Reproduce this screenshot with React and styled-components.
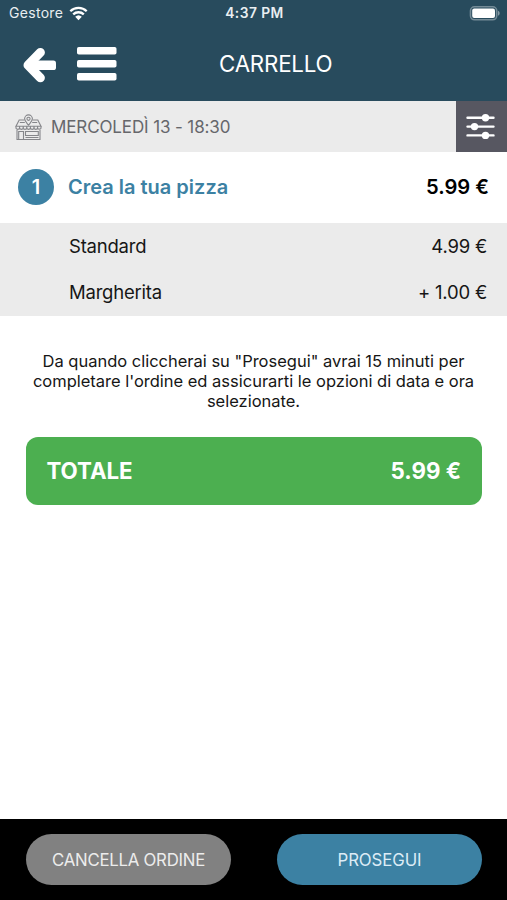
import styled, { createGlobalStyle } from "styled-components";

const GlobalStyle = createGlobalStyle`
  * {
    box-sizing: border-box;
  }

  body {
    margin: 0;
    background: #fff;
    font-family: Inter, "Liberation Sans", sans-serif;
  }
`;

const Screen = styled.div`
  display: flex;
  flex-direction: column;
  width: 507px;
  height: 900px;
  overflow: hidden;
  background: #fff;
  color: #161616;
`;

const Header = styled.header`
  height: 101px;
  background: #284b5d;
  color: #fff;
`;

const StatusBar = styled.div`
  display: grid;
  grid-template-columns: 1fr auto 1fr;
  align-items: center;
  height: 27px;
  padding: 0 7px 0 9px;
  color: #e9eef1;
`;

const Carrier = styled.div`
  display: flex;
  align-items: center;
  gap: 6px;
`;

const BatteryWrapper = styled.div`
  display: flex;
  justify-content: flex-end;
`;

const TitleBar = styled.div`
  display: flex;
  align-items: center;
  height: 73px;
  padding-left: 22px;

  & svg {
    flex: none;
  }
`;

const MenuIcon = styled.svg`
  margin: 0 102px 0 20px;
`;

const Text = styled.span`
  font-size: ${({ $size }) => $size}px;
  font-weight: ${({ $weight }) => $weight || 400};
  letter-spacing: ${({ $spacing }) => $spacing || 0}px;
  line-height: 1.2;
  white-space: nowrap;
`;

const Title = styled(Text)`
  padding-top: 2px;
`;

const DateBar = styled.div`
  display: flex;
  align-items: center;
  height: 51px;
  padding-left: 15px;
  background: #ebebeb;
  color: #66676b;
`;

const DateText = styled(Text)`
  flex: 1;
  margin-left: 9px;
  padding-top: 2px;
`;

const FilterButton = styled.button`
  display: flex;
  align-items: center;
  justify-content: center;
  width: 51px;
  height: 51px;
  padding: 0 2px 0 0;
  border: none;
  background: #575761;
`;

const Product = styled.div`
  display: flex;
  align-items: center;
  height: 71px;
  padding: 0 18px 1px;
  color: #000;
`;

const Quantity = styled.div`
  display: flex;
  align-items: center;
  justify-content: center;
  width: 36px;
  height: 36px;
  margin-right: 14px;
  border-radius: 50%;
  background: #3c81a3;
  color: #fff;
`;

const ProductName = styled(Text)`
  flex: 1;
  color: #3c81a3;
`;

const Options = styled.div`
  padding-bottom: 1px;
  background: #ebebeb;
`;

const Option = styled.div`
  display: flex;
  align-items: center;
  justify-content: space-between;
  height: 46px;
  padding: 0 20px 0 69px;
`;

const Notice = styled.p`
  margin: 35px 20px 25.5px;
  font-size: 16.5px;
  line-height: 20px;
  text-align: center;
  letter-spacing: -0.01px;
  white-space: nowrap;
`;

const Total = styled.div`
  display: flex;
  align-items: center;
  justify-content: space-between;
  height: 68px;
  margin: 0 25px 0 26px;
  padding: 1px 21px 0 20.5px;
  border-radius: 12px;
  background: #4caf50;
  color: #fff;
`;

const Footer = styled.footer`
  display: flex;
  justify-content: space-between;
  height: 81px;
  margin-top: auto;
  padding: 15px 25px 0 26px;
  background: #000;
`;

const Button = styled.button`
  width: 205px;
  height: 51px;
  padding: 2px 0 0;
  border: none;
  border-radius: 26px;
  background: ${({ $primary }) => ($primary ? "#3c81a3" : "#818181")};
  color: ${({ $primary }) => ($primary ? "#dcecf6" : "#ececec")};
  font-family: inherit;
`;

const options = [
  { name: "Standard", price: "4.99 €" },
  { name: "Margherita", price: "+ 1.00 €" },
];

function Wifi() {
  return (
    <svg width='19' height='15' viewBox='0 0 19 15' fill='none'>
      <path
        d='M1.3 5.3a11.7 11.7 0 0 1 16.4 0M4.2 8.4a7.6 7.6 0 0 1 10.6 0'
        stroke='#fff'
        strokeWidth='2.3'
      />
      <path d='M9.5 14.2 6.2 10.8a4.8 4.8 0 0 1 6.6 0z' fill='#fff' />
    </svg>
  );
}

function Battery() {
  return (
    <svg width='31' height='15' viewBox='0 0 31 15'>
      <rect
        x='1.5'
        y='0.8'
        width='26.2'
        height='13'
        rx='4'
        fill='none'
        stroke='#748b97'
        strokeWidth='1.6'
      />
      <rect x='3.2' y='2.6' width='22.8' height='9.4' rx='2' fill='#fff' />
      <path d='M29 4.8c2.2 1 2.2 4 0 5z' fill='#8599a3' />
    </svg>
  );
}

function BackArrow() {
  return (
    <svg width='35' height='38' viewBox='0 0 35 38' fill='#fff'>
      <path
        d='M18.4 7.4 6 20.2l12.4 12.6'
        fill='none'
        stroke='#fff'
        strokeWidth='9'
        strokeLinecap='round'
        strokeLinejoin='round'
      />
      <rect x='8' y='15.6' width='26' height='9.4' rx='2.6' />
    </svg>
  );
}

function Shop() {
  return (
    <svg
      width='27'
      height='28'
      viewBox='0 -1 27 28'
      fill='none'
      stroke='#85868a'
      strokeWidth='1.1'
    >
      <path d='M9.5 6H4.2L1 12.2h25L22.8 6h-5.3M4.8 8.5h5M17.2 8.5h5' />
      <path d='M1 12.2v2a2 2 0 0 0 3.6 0 2 2 0 0 0 3.6 0 2 2 0 0 0 3.6 0 2 2 0 0 0 3.6 0 2 2 0 0 0 3.6 0 2 2 0 0 0 3.6 0 2 2 0 0 0 3.4 0v-2' />
      <path d='M4.6 12v2M8.2 12v2M11.8 12v2M15.4 12v2M19 12v2M22.6 12v2' />
      <path d='M2 16v9.5h23V16M3.7 25V17.5h4.8V25M10.5 17.5h12.8v4H10.5zM10.5 23.5h13' />
      <path d='M13.5 11.2C11.3 8.4 9.6 6.9 9.6 4.8a3.9 3.9 0 0 1 7.8 0c0 2.1-1.7 3.6-3.9 6.4z' />
      <circle cx='13.5' cy='4.8' r='1.6' />
    </svg>
  );
}

function Sliders() {
  return (
    <svg width='31' height='27' viewBox='0 0 31 27' fill='#fff'>
      <path
        d='M2.5 4.8h26M2.5 13.6h26M2.5 22.4h26'
        stroke='#fff'
        strokeWidth='2.4'
        strokeLinecap='round'
      />
      <circle cx='20.5' cy='4.8' r='3.7' />
      <circle cx='9.5' cy='13.6' r='3.7' />
      <circle cx='20.5' cy='22.4' r='3.7' />
    </svg>
  );
}

export default function App() {
  return (
    <>
      <GlobalStyle />
      <Screen>
        <Header>
          <StatusBar>
            <Carrier>
              <Text $size={14} $spacing={0.3}>
                Gestore
              </Text>
              <Wifi />
            </Carrier>
            <Text $size={13.8} $weight={600} $spacing={0.45}>
              4:37 PM
            </Text>
            <BatteryWrapper>
              <Battery />
            </BatteryWrapper>
          </StatusBar>
          <TitleBar>
            <BackArrow />
            <MenuIcon width='40' height='34' viewBox='0 0 40 34' fill='#fff'>
              <rect width='39.5' height='7.5' rx='1.8' />
              <rect y='13' width='39.5' height='7.5' rx='1.8' />
              <rect y='26' width='39.5' height='7.5' rx='1.8' />
            </MenuIcon>
            <Title $size={22.3} $spacing={-0.2}>
              CARRELLO
            </Title>
          </TitleBar>
        </Header>
        <DateBar>
          <Shop />
          <DateText $size={17} $spacing={-0.12}>
            MERCOLEDÌ 13 - 18:30
          </DateText>
          <FilterButton>
            <Sliders />
          </FilterButton>
        </DateBar>
        <Product>
          <Quantity>
            <Text $size={20} $weight={600}>
              1
            </Text>
          </Quantity>
          <ProductName $size={20} $weight={600}>
            Crea la tua pizza
          </ProductName>
          <Text $size={20.2} $weight={600}>
            5.99 €
          </Text>
        </Product>
        <Options>
          {options.map((option) => (
            <Option key={option.name}>
              <Text $size={18.5} $spacing={-0.22}>
                {option.name}
              </Text>
              <Text $size={18.5} $spacing={-0.22}>
                {option.price}
              </Text>
            </Option>
          ))}
        </Options>
        <Notice>
          Da quando cliccherai su "Prosegui" avrai 15 minuti per
          <br />
          completare l'ordine ed assicurarti le opzioni di data e ora
          <br />
          selezionate.
        </Notice>
        <Total>
          <Text $size={22.3} $weight={700} $spacing={-0.05}>
            TOTALE
          </Text>
          <Text $size={22.3} $weight={700}>
            5.99 €
          </Text>
        </Total>
        <Footer>
          <Button>
            <Text $size={16.8} $spacing={-0.25}>
              CANCELLA ORDINE
            </Text>
          </Button>
          <Button $primary>
            <Text $size={16.8} $spacing={-0.1}>
              PROSEGUI
            </Text>
          </Button>
        </Footer>
      </Screen>
    </>
  );
}
